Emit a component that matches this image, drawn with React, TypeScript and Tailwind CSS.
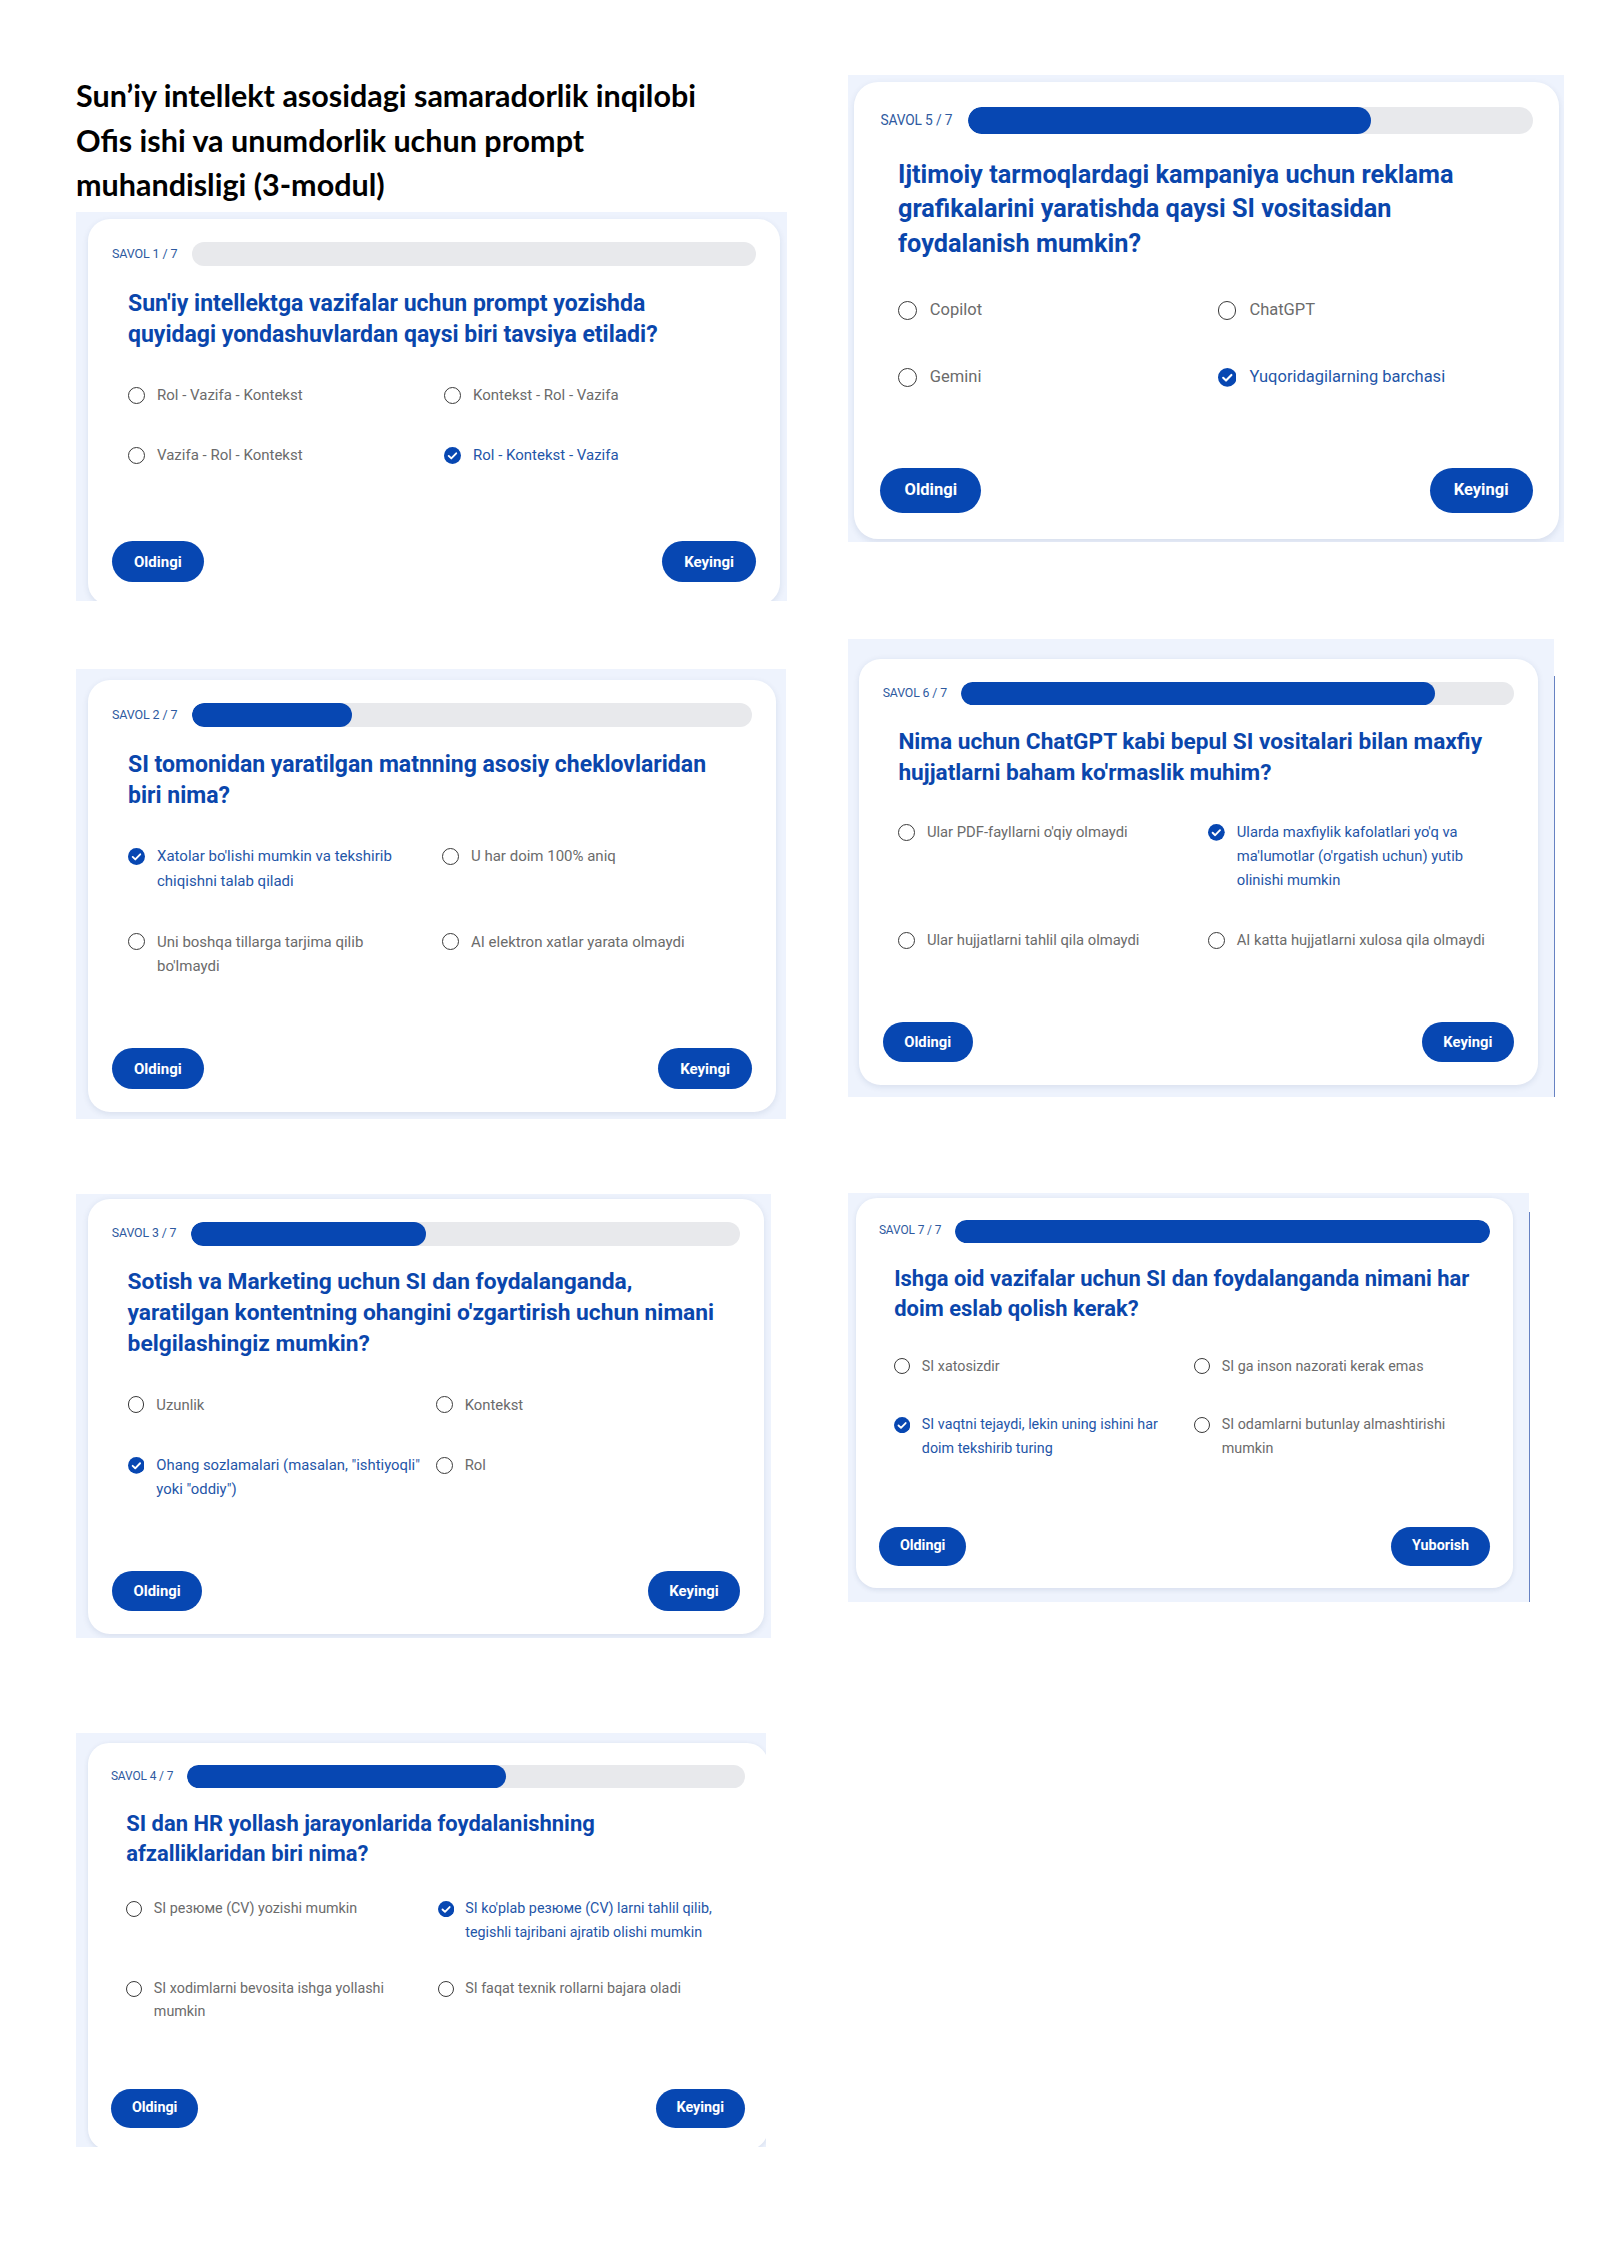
import React from 'react';

type Question = {
  n: number;
  progress: number;
  text: string;
  options: string[];
  answer: number;
};

const QUIZ: Question[] = [
  {
    n: 1,
    progress: 0,
    text: "Sun'iy intellektga vazifalar uchun prompt yozishda\nquyidagi yondashuvlardan qaysi biri tavsiya etiladi?",
    options: ['Rol - Vazifa - Kontekst', 'Kontekst - Rol - Vazifa', 'Vazifa - Rol - Kontekst', 'Rol - Kontekst - Vazifa'],
    answer: 3,
  },
  {
    n: 2,
    progress: 2,
    text: 'SI tomonidan yaratilgan matnning asosiy cheklovlaridan\nbiri nima?',
    options: [
      "Xatolar bo'lishi mumkin va tekshirib\nchiqishni talab qiladi",
      'U har doim 100% aniq',
      "Uni boshqa tillarga tarjima qilib\nbo'lmaydi",
      'AI elektron xatlar yarata olmaydi',
    ],
    answer: 0,
  },
  {
    n: 3,
    progress: 3,
    text: "Sotish va Marketing uchun SI dan foydalanganda,\nyaratilgan kontentning ohangini o'zgartirish uchun nimani\nbelgilashingiz mumkin?",
    options: ['Uzunlik', 'Kontekst', 'Ohang sozlamalari (masalan, "ishtiyoqli"\nyoki "oddiy")', 'Rol'],
    answer: 2,
  },
  {
    n: 4,
    progress: 4,
    text: 'SI dan HR yollash jarayonlarida foydalanishning\nafzalliklaridan biri nima?',
    options: [
      'SI резюме (CV) yozishi mumkin',
      "SI ko'plab резюме (CV) larni tahlil qilib,\ntegishli tajribani ajratib olishi mumkin",
      'SI xodimlarni bevosita ishga yollashi\nmumkin',
      'SI faqat texnik rollarni bajara oladi',
    ],
    answer: 1,
  },
  {
    n: 5,
    progress: 5,
    text: 'Ijtimoiy tarmoqlardagi kampaniya uchun reklama\ngrafikalarini yaratishda qaysi SI vositasidan\nfoydalanish mumkin?',
    options: ['Copilot', 'ChatGPT', 'Gemini', 'Yuqoridagilarning barchasi'],
    answer: 3,
  },
  {
    n: 6,
    progress: 6,
    text: "Nima uchun ChatGPT kabi bepul SI vositalari bilan maxfiy\nhujjatlarni baham ko'rmaslik muhim?",
    options: [
      "Ular PDF-fayllarni o'qiy olmaydi",
      "Ularda maxfiylik kafolatlari yo'q va\nma'lumotlar (o'rgatish uchun) yutib\nolinishi mumkin",
      'Ular hujjatlarni tahlil qila olmaydi',
      'AI katta hujjatlarni xulosa qila olmaydi',
    ],
    answer: 1,
  },
  {
    n: 7,
    progress: 7,
    text: 'Ishga oid vazifalar uchun SI dan foydalanganda nimani har\ndoim eslab qolish kerak?',
    options: [
      'SI xatosizdir',
      'SI ga inson nazorati kerak emas',
      'SI vaqtni tejaydi, lekin uning ishini har\ndoim tekshirib turing',
      'SI odamlarni butunlay almashtirishi\nmumkin',
    ],
    answer: 2,
  },
];

type Spacing = { opts: string; rows: string; foot: string };

const NORMAL: Spacing = { opts: 'mt-[32.6px]', rows: 'gap-y-[37px]', foot: 'mt-[70px]' };
const LOOSE: Spacing = { opts: 'mt-[32.6px]', rows: 'gap-y-[35.5px]', foot: 'mt-[74px]' };
const TIGHT: Spacing = { opts: 'mt-[30px]', rows: 'gap-y-[35px]', foot: 'mt-[68px]' };

function Radio({ on }: { on: boolean }) {
  if (on) {
    return (
      <svg width="17" height="17" viewBox="0 0 17 17" className="mt-[3.5px] shrink-0">
        <circle cx="8.5" cy="8.5" r="8.5" fill="#0747b2" />
        <path d="M4.7 8.9l2.6 2.5 4.9-5.1" fill="none" stroke="#fff" strokeWidth="1.9" strokeLinecap="round" strokeLinejoin="round" />
      </svg>
    );
  }
  return <span className="mt-[3.5px] h-[17px] w-[17px] shrink-0 rounded-full border-[1.5px] border-[#3a3a3a]" />;
}

function QuizCard({ q, className, sp = NORMAL }: { q: Question; className: string; sp?: Spacing }) {
  return (
    <div className={`shrink-0 rounded-[22px] bg-white px-6 pt-[23px] pb-[23px] shadow-[0_2px_6px_rgba(20,45,100,0.10)] [font-family:Roboto,sans-serif] ${className}`}>
      <div className="flex items-center gap-4">
        <span className="w-16 shrink-0 whitespace-nowrap text-[12.5px] tracking-[-0.01em] text-[#2e5aa0]">
          SAVOL {q.n} / 7
        </span>
        <div className="h-6 flex-1 overflow-hidden rounded-full bg-[#e8e9ec]">
          <div className="h-full rounded-full bg-[#0747b2]" style={{ width: `${(q.progress / 7) * 100}%` }} />
        </div>
      </div>

      <h2 className="mt-[22px] whitespace-pre px-4 text-[23px] font-bold leading-[31.3px] text-[#0a46ac]">{q.text}</h2>

      <div className={`grid grid-cols-2 gap-x-5 px-4 ${sp.opts} ${sp.rows}`}>
        {q.options.map((opt, i) => (
          <div key={i} className="flex items-start gap-3">
            <Radio on={i === q.answer} />
            <span
              className={`whitespace-pre text-[15px] leading-[24.3px] ${i === q.answer ? 'text-[#1f56a8]' : 'text-[#6b6b6b]'}`}
            >
              {opt}
            </span>
          </div>
        ))}
      </div>

      <div className={`flex justify-between ${sp.foot}`}>
        <button className="h-[41px] rounded-full bg-[#0747b2] px-[22px] text-[15px] font-bold text-white">Oldingi</button>
        <button className="h-[41px] rounded-full bg-[#0747b2] px-[22px] text-[15px] font-bold text-white">
          {q.n === 7 ? 'Yuborish' : 'Keyingi'}
        </button>
      </div>
    </div>
  );
}

export default function App() {
  return (
    <div className="flex min-h-[2262px] w-[1600px] bg-white pl-[76px]">
      {/* chap ustun */}
      <div className="flex w-[712px] shrink-0 flex-col pt-[73px]">
        <h1 className="text-[30.5px] font-bold leading-[44.7px] text-black [font-family:Lato,sans-serif]">
          Sun’iy intellekt asosidagi samaradorlik inqilobi
          <br />
          Ofis ishi va unumdorlik uchun prompt
          <br />
          muhandisligi (3-modul)
        </h1>

        <div className="mt-[5px] h-[389px] w-[711px] overflow-hidden bg-[#eef3fd] pl-3 pt-[7px]">
          <QuizCard q={QUIZ[0]} className="w-[692px]" sp={LOOSE} />
        </div>

        <div className="mt-[68px] h-[450px] w-[710px] overflow-hidden bg-[#eef3fd] pl-3 pt-[11px]">
          <QuizCard q={QUIZ[1]} className="w-[688px]" />
        </div>

        <div className="mt-[75px] h-[444px] w-[695px] overflow-hidden bg-[#eef3fd] pl-3 pt-[5px]">
          <QuizCard q={QUIZ[2]} className="w-[683px] [zoom:0.99]" />
        </div>

        <div className="mt-[95px] h-[414px] w-[690px] overflow-hidden bg-[#eef3fd] pl-3 pt-[10px]">
          <QuizCard q={QUIZ[3]} className="w-[712px] [zoom:0.955]" sp={TIGHT} />
        </div>
      </div>

      {/* o'ng ustun */}
      <div className="ml-[60px] flex flex-col pt-[75px]">
        <div className="h-[467px] w-[716px] overflow-hidden bg-[#eef3fd] pl-[6px] pt-[7px]">
          <QuizCard q={QUIZ[4]} className="w-[641px] [zoom:1.1]" />
        </div>

        <div className="mt-[97px] flex">
          <div className="h-[458px] w-[706px] overflow-hidden bg-[#eef3fd] pl-[11px] pt-[20px]">
            <QuizCard q={QUIZ[5]} className="w-[689px] [zoom:0.985]" />
          </div>
          <div className="mt-[37px] w-px bg-[#6782c2]" />
        </div>

        <div className="mt-[96px] flex">
          <div className="h-[409px] w-[681px] overflow-hidden bg-[#eef3fd] pl-[8px] pt-[5px]">
            <QuizCard q={QUIZ[6]} className="w-[688px] [zoom:0.955]" />
          </div>
          <div className="mt-[19px] w-px bg-[#6782c2]" />
        </div>
      </div>
    </div>
  );
}
